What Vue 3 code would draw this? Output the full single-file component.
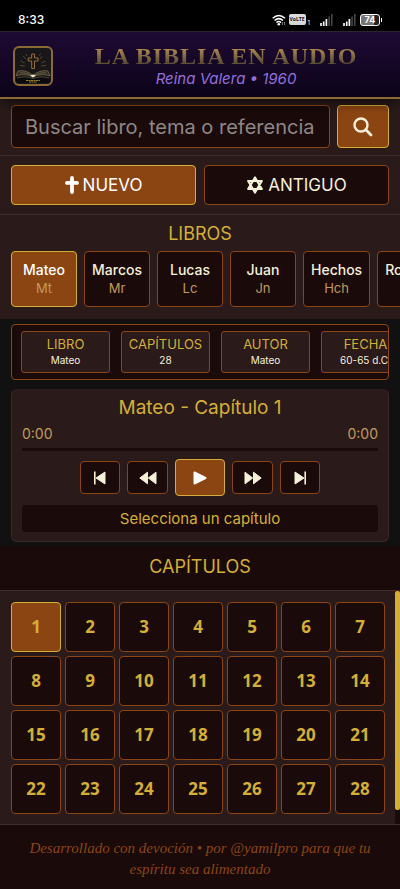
<script setup>
import { ref } from 'vue'

const query = ref('')
const testament = ref('nuevo')
const book = ref('Mateo')
const chapter = ref(1)
const progress = ref(0)

const books = [
  { name: 'Mateo', abbr: 'Mt' },
  { name: 'Marcos', abbr: 'Mr' },
  { name: 'Lucas', abbr: 'Lc' },
  { name: 'Juan', abbr: 'Jn' },
  { name: 'Hechos', abbr: 'Hch' },
  { name: 'Romanos', abbr: 'Ro' }
]

const facts = [
  { label: 'LIBRO', value: 'Mateo' },
  { label: 'CAPÍTULOS', value: '28' },
  { label: 'AUTOR', value: 'Mateo' },
  { label: 'FECHA', value: '60-65 d.C.' }
]
</script>

<template>
  <div class="app">
    <div class="status">
      <span class="clock">8:33</span>
      <div class="indicators">
        <svg class="wifi" viewBox="0 0 14 12" width="14" height="12" aria-hidden="true">
          <g fill="none" stroke="#fff" stroke-width="1.5">
            <path d="M.7 4.3Q6.8-1.2 13 4.3" />
            <path d="M2.6 6.5Q6.8 2.7 11 6.5" />
            <path d="M4.5 8.6Q6.8 6.5 9 8.6" />
          </g>
          <circle cx="6.8" cy="10.2" r="1.3" fill="#fff" />
          <path d="M10.4 8v3M12.6 8v3" stroke="#888" stroke-width="1" />
        </svg>
        <span class="volte">VoLTE</span>
        <span class="sim">1</span>
        <svg class="signal first" viewBox="0 0 13 12" width="13" height="12" aria-hidden="true">
          <path d="M1 9v3M3.7 7.5V12M6.4 5V12" stroke="#fff" stroke-width="1.7" />
          <path d="M9.1 2.5V12M11.8 0V12" stroke="#4c4c4c" stroke-width="1.5" />
        </svg>
        <svg class="signal" viewBox="0 0 13 12" width="13" height="12" aria-hidden="true">
          <path d="M1 9v3M3.7 7.5V12M6.4 5V12" stroke="#fff" stroke-width="1.7" />
          <path d="M9.1 2.5V12M11.8 0V12" stroke="#4c4c4c" stroke-width="1.5" />
        </svg>
        <span class="battery">74</span>
      </div>
    </div>

    <header class="header">
      <svg class="logo" viewBox="0 0 40 40" width="40" height="40" role="img" aria-label="La Biblia en Audio">
        <rect x="1" y="1" width="38" height="38" rx="5" fill="#171719" stroke="#8c6a35" stroke-width="2" />
        <path d="M3 29h34v5a3 3 0 0 1-3 3H6a3 3 0 0 1-3-3z" fill="#0b0b0d" />
        <path d="M18.7 8h2.8v4h3.6v3h-3.6v7.5h-2.8V15h-3.5v-3h3.5z" fill="#1b1712" stroke="#96703a" stroke-width="1" />
        <g stroke="#5d4828" stroke-width=".9">
          <path d="M13 13l-3-3M11.5 17l-4-2M12 20l-5-.5M27 13l2-2.6M28.5 17l4-2M28 20l5-.5M14 10l-1-2M26.5 9.5l1-2" />
        </g>
        <path d="M20 30c-3-4-9-6-15-5l-2 5c6-2 12-1.500 17 1 5-2.500 11-3 17-1l-2-5c-6-1-12 1-15 5z" fill="#353027" stroke="#7d6744" stroke-width=".8" />
        <path d="M7 27c5-.6 9 .6 12 3M33 27c-5-.6-9 .6-12 3M4 32c6-2 12-1 16 .5 4-1.500 10-2.500 16-.5" fill="none" stroke="#80765f" stroke-width=".6" />
        <path d="M17 29.500l3-1 3 1-3 2z" fill="#f1e6ca" />
        <path d="M13 34.500h14M16 36h8" stroke="#a07d2b" stroke-width="1.200" stroke-dasharray="2 .5" />
      </svg>
      <div class="titles">
        <h1>LA BIBLIA EN AUDIO</h1>
        <p>Reina Valera • 1960</p>
      </div>
    </header>

    <form class="search" @submit.prevent>
      <input v-model="query" type="text" aria-label="Buscar" placeholder="Buscar libro, tema o referencia" />
      <button type="submit" class="box active" aria-label="Buscar">
        <svg viewBox="0 0 20 20" width="20" height="20" aria-hidden="true">
          <circle cx="8" cy="8" r="6.500" fill="none" stroke="#f5f0d8" stroke-width="2.400" />
          <path d="M12.800 12.800l5.200 5.200" stroke="#f5f0d8" stroke-width="2.800" stroke-linecap="round" />
        </svg>
      </button>
    </form>

    <div class="testaments">
      <button type="button" class="box" :class="{ active: testament === 'nuevo' }" @click="testament = 'nuevo'">
        <svg viewBox="0 0 14 18" width="14" height="18" aria-hidden="true">
          <path d="M7 2v14M2 6.900h10" stroke="currentColor" stroke-width="3.800" stroke-linecap="round" />
        </svg>
        NUEVO
      </button>
      <button type="button" class="box" :class="{ active: testament === 'antiguo' }" @click="testament = 'antiguo'">
        <svg viewBox="0 0 18 18" width="18" height="18" aria-hidden="true">
          <path d="M9 1.500L15.800 13H2.200zM9 16.500L2.200 5h13.600z" fill="none" stroke="currentColor" stroke-width="2.200" stroke-linejoin="round" />
        </svg>
        ANTIGUO
      </button>
    </div>

    <section class="books">
      <h2>LIBROS</h2>
      <div class="book-row">
        <button
          v-for="b in books"
          :key="b.name"
          type="button"
          class="box book"
          :class="{ active: book === b.name }"
          @click="book = b.name"
        >
          <span class="name">{{ b.name }}</span>
          <span class="abbr">{{ b.abbr }}</span>
        </button>
      </div>
    </section>

    <main class="content">
      <dl class="facts">
        <div v-for="f in facts" :key="f.label" class="fact">
          <dt>{{ f.label }}</dt>
          <dd>{{ f.value }}</dd>
        </div>
      </dl>

      <section class="player">
        <h2>Mateo - Capítulo 1</h2>
        <div class="times"><span>0:00</span><span>0:00</span></div>
        <input v-model="progress" class="track" type="range" min="0" max="100" aria-label="Progreso" />
        <div class="controls">
          <button type="button" class="box" aria-label="Capítulo anterior">
            <svg viewBox="0 0 14 14" width="14" height="14" aria-hidden="true">
              <path d="M1.800.5v13" stroke="currentColor" stroke-width="1.600" />
              <path d="M12 1v12L3 7z" fill="currentColor" stroke="currentColor" stroke-linejoin="round" />
            </svg>
          </button>
          <button type="button" class="box wide" aria-label="Retroceder">
            <svg viewBox="0 0 18 14" width="18" height="14" aria-hidden="true">
              <path d="M8.500 1.200v11.600L.8 7zM17 1.200v11.600L9.300 7z" fill="currentColor" stroke="currentColor" stroke-linejoin="round" />
            </svg>
          </button>
          <button type="button" class="box play active" aria-label="Reproducir">
            <svg viewBox="0 0 16 16" width="16" height="16" aria-hidden="true">
              <path d="M2.500 2.500v11L13.500 8z" fill="currentColor" stroke="currentColor" stroke-width="2" stroke-linejoin="round" />
            </svg>
          </button>
          <button type="button" class="box wide" aria-label="Avanzar">
            <svg viewBox="0 0 18 14" width="18" height="14" aria-hidden="true">
              <path d="M9.500 1.200v11.600L17.200 7zM1 1.200v11.600L8.700 7z" fill="currentColor" stroke="currentColor" stroke-linejoin="round" />
            </svg>
          </button>
          <button type="button" class="box" aria-label="Capítulo siguiente">
            <svg viewBox="0 0 14 14" width="14" height="14" aria-hidden="true">
              <path d="M12.200.5v13" stroke="currentColor" stroke-width="1.600" />
              <path d="M2 1v12L11 7z" fill="currentColor" stroke="currentColor" stroke-linejoin="round" />
            </svg>
          </button>
        </div>
        <p class="message">Selecciona un capítulo</p>
      </section>
    </main>

    <section class="chapters">
      <h2>CAPÍTULOS</h2>
      <div class="scroller">
        <div class="grid">
          <button
            v-for="n in 28"
            :key="n"
            type="button"
            class="box chapter"
            :class="{ active: chapter === n }"
            @click="chapter = n"
          >{{ n }}</button>
        </div>
        <div class="bar"><div class="thumb"></div></div>
      </div>
    </section>

    <footer class="footer">Desarrollado con devoción • por @yamilpro para que tu espíritu sea alimentado</footer>
  </div>
</template>

<style>
body {
  margin: 0;
  background: #1a0a0a;
}
</style>

<style scoped>
.app {
  min-height: 100vh;
  display: flex;
  flex-direction: column;
  overflow: hidden;
  background: #1a0a0a;
  color: #f5f0d8;
  font-family: Inter, 'Noto Sans', sans-serif;
}
.app * {
  box-sizing: border-box;
}
h1, h2, p, dl, dd {
  margin: 0;
}
button, input {
  font: inherit;
  color: inherit;
}
svg {
  display: block;
  flex: none;
}
h2 {
  color: #d4af37;
  font-size: 18px;
  line-height: 24px;
  font-weight: 400;
  text-align: center;
}
.box {
  display: flex;
  align-items: center;
  justify-content: center;
  padding: 0;
  border: 1px solid #8b4513;
  border-radius: 4px;
  background: #1a0a0a;
  color: #f5f0d8;
}
.box.active {
  border-color: #d4af37;
  background: #8b4513;
  color: #fff;
}

.status {
  height: 31px;
  padding: 8px 20px 0 18px;
  display: flex;
  align-items: center;
  justify-content: space-between;
  background: #000;
  color: #fff;
}
.clock {
  font-size: 12px;
  font-weight: 500;
}
.indicators {
  display: flex;
  align-items: center;
}
.volte {
  width: 17px;
  margin-left: 3px;
  border-radius: 2px;
  background: #ddd;
  color: #111;
  font: 700 5px/11px 'Open Sans', sans-serif;
  text-align: center;
}
.sim {
  margin: 5px 10px 0 2px;
  font-size: 6px;
}
.signal.first {
  margin-right: 10px;
}
.signal:not(.first) {
  margin-right: 4px;
}
.battery {
  position: relative;
  width: 20px;
  border: 1px solid #fff;
  border-radius: 3px;
  background: linear-gradient(90deg, #777 74%, #222 74%);
  font-size: 9px;
  font-weight: 700;
  line-height: 10px;
  text-align: center;
}
.battery::after {
  content: '';
  position: absolute;
  right: -3px;
  top: 3px;
  width: 1px;
  height: 4px;
  background: #fff;
}

.header {
  position: relative;
  display: flex;
  align-items: center;
  gap: 10px;
  height: 68px;
  padding: 2px 11px 0 13px;
  border-top: 1px solid #2d2238;
  border-bottom: 2px solid #8c6a35;
  background: linear-gradient(#1e0a33, #0c0319);
  box-shadow: 0 3px 12px rgba(0, 0, 0, .6);
}
.titles {
  flex: 1;
  text-align: center;
}
h1 {
  background: linear-gradient(#a88450 25%, #5e5035 75%);
  background-clip: text;
  color: transparent;
  font-family: 'Liberation Serif', serif;
  font-size: 24px;
  line-height: 26px;
  font-weight: 700;
  letter-spacing: 1px;
  white-space: nowrap;
}
.titles p {
  color: #9370db;
  font-size: 15px;
  line-height: 20px;
  font-style: italic;
}

.search {
  display: flex;
  gap: 7px;
  padding: 6px 11px 7px;
  border-bottom: 1px solid #3f2d2d;
  background: #2a1a1a;
}
.search input {
  flex: 1;
  min-width: 0;
  height: 43px;
  padding: 0 13px;
  border: 1px solid #8b4513;
  border-radius: 4px;
  background: #1a0a0a;
  font-size: 20px;
  outline: none;
}
.search input::placeholder {
  color: #8f8785;
  opacity: 1;
}
.search button {
  width: 52px;
}

.testaments {
  display: grid;
  grid-template-columns: 1fr 1fr;
  gap: 8px;
  padding: 9px 11px;
  border-bottom: 1px solid #3f2d2d;
  background: #2a1a1a;
}
.testaments .box {
  gap: 4px;
  height: 40px;
  font-size: 17px;
}

.books {
  padding: 7px 0 12px;
  background: #2a1a1a;
}
.book-row {
  display: flex;
  gap: 7px;
  margin-top: 5px;
  padding-left: 11px;
  overflow: hidden;
}
.book {
  flex: none;
  flex-direction: column;
  min-width: 66px;
  height: 56px;
  padding: 0 7px;
  font-size: 14px;
  line-height: 18px;
}
.book .name {
  font-weight: 500;
}
.book .abbr {
  color: #c19a5b;
  font-size: 13px;
}

.content {
  padding: 5px 11px 4px;
  background: #111;
}
.facts {
  display: flex;
  gap: 11px;
  padding: 6px 9px;
  border: 1px solid #8b4513;
  border-radius: 4px;
  background: #1a0a0a;
  overflow: hidden;
}
.fact {
  flex: none;
  width: 89px;
  height: 42px;
  padding-top: 4px;
  border: 1px solid #8b4513;
  border-radius: 3px;
  background: #2a1a1a;
  text-align: center;
  white-space: nowrap;
}
.fact dt {
  color: #d4af37;
  font-size: 13px;
  line-height: 17px;
}
.fact dd {
  font-size: 10px;
  line-height: 15px;
}

.player {
  margin-top: 9px;
  padding: 6px 10px 9px;
  border: 1px solid #3a2929;
  border-top-color: #2a1a1a;
  border-radius: 6px;
  background: #2a1a1a;
}
.player h2 {
  font-size: 19px;
}
.times {
  display: flex;
  justify-content: space-between;
  margin-top: 4px;
  color: #c19a5b;
  font-size: 14px;
  line-height: 20px;
}
.track {
  display: block;
  appearance: none;
  width: 100%;
  height: 3px;
  margin: 4px 0 8px;
  border-radius: 2px;
  background: #1a0a0a;
}
.track::-webkit-slider-thumb {
  appearance: none;
  width: 1px;
  height: 1px;
}
.controls {
  display: flex;
  align-items: center;
  justify-content: center;
  gap: 7px;
}
.controls .box {
  width: 40px;
  height: 33px;
}
.controls .wide {
  width: 41px;
}
.controls .play {
  width: 50px;
  height: 37px;
}
.message {
  margin-top: 9px;
  border-radius: 4px;
  background: #1a0a0a;
  color: #d4af37;
  font-size: 15px;
  line-height: 27px;
  text-align: center;
}

.chapters h2 {
  padding: 9px 0 11px;
  border-bottom: 1px solid #3f2d2d;
}
.scroller {
  display: flex;
  background: #2a1a1a;
}
.grid {
  flex: 1;
  display: grid;
  grid-template-columns: repeat(7, 1fr);
  gap: 4px;
  padding: 11px 10px 10px 11px;
}
.chapter {
  height: 50px;
  padding-bottom: 2px;
  color: #d4af37;
  font-family: 'Noto Sans', sans-serif;
  font-size: 17px;
  font-weight: 700;
}
.chapter.active {
  color: #d4af37;
}
.bar {
  width: 5px;
  background: #1a0a0a;
}
.thumb {
  height: 94%;
  border-radius: 2px;
  background: #d4af37;
}

.footer {
  flex: 1;
  padding: 13px 28px;
  border-top: 1px solid #3f2d2d;
  color: #8b4513;
  font-family: 'Liberation Serif', serif;
  font-size: 15px;
  line-height: 21px;
  font-style: italic;
  text-align: center;
}
</style>
